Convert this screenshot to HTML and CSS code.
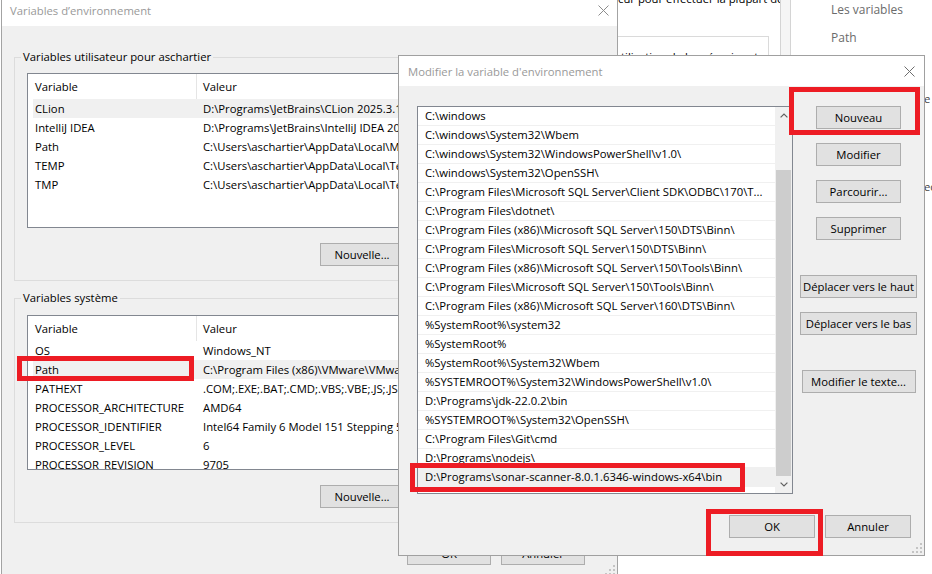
FILE: index.html
```html
<!doctype html>
<html>
  <head>
    <meta charset="utf-8">
    <title>Variables d'environnement</title>
    <link rel="stylesheet" href="styles.css">
  </head>
  <body>
    <div class="bg-win">
      <p class="bg-line">cur pour effectuer la plupart de</p>
      <div class="bg-box">
        <p class="bg-line">tilisation de la mémoire et</p>
      </div>
    </div>
    <div class="bg-split"></div>
    <div class="bg-pane">
      <p class="pane-item">Les variables</p>
      <p class="pane-item">Path</p>
      <p class="pane-tail first">e</p>
      <p class="pane-tail">ec</p>
    </div>

    <section class="win win-env">
      <header class="titlebar">
        <span>Variables d’environnement</span>
        <svg class="close" width="11" height="11" viewBox="0 0 11 11"><path d="M0.5 0.5L10.5 10.5M10.5 0.5L0.5 10.5" stroke="#8c8c8c" stroke-width="1"/></svg>
      </header>
      <div class="env-body">
        <fieldset class="group">
          <legend>Variables utilisateur pour aschartier</legend>
          <div class="listview">
            <div class="lv-head"><span class="col-name">Variable</span><span class="col-val">Valeur</span></div>
            <div class="lv-row sel"><span class="col-name">CLion</span><span class="col-val">D:\Programs\JetBrains\CLion 2025.3.1\bin;</span></div>
            <div class="lv-row"><span class="col-name">IntelliJ IDEA</span><span class="col-val">D:\Programs\JetBrains\IntelliJ IDEA 2025.3\bin;</span></div>
            <div class="lv-row"><span class="col-name">Path</span><span class="col-val">C:\Users\aschartier\AppData\Local\Microsoft\WindowsApps;</span></div>
            <div class="lv-row"><span class="col-name">TEMP</span><span class="col-val">C:\Users\aschartier\AppData\Local\Temp</span></div>
            <div class="lv-row"><span class="col-name">TMP</span><span class="col-val">C:\Users\aschartier\AppData\Local\Temp</span></div>
          </div>
          <div class="group-actions">
            <button class="btn">Nouvelle...</button>
          </div>
        </fieldset>

        <fieldset class="group">
          <legend>Variables système</legend>
          <div class="listview">
            <div class="lv-head"><span class="col-name">Variable</span><span class="col-val">Valeur</span></div>
            <div class="lv-row"><span class="col-name">OS</span><span class="col-val">Windows_NT</span></div>
            <div class="lv-row sel"><span class="col-name">Path</span><span class="col-val">C:\Program Files (x86)\VMware\VMware Player\bin\;</span></div>
            <div class="lv-row"><span class="col-name">PATHEXT</span><span class="col-val">.COM;.EXE;.BAT;.CMD;.VBS;.VBE;.JS;.JSE;.WSF;.WSH;.MSC</span></div>
            <div class="lv-row"><span class="col-name">PROCESSOR_ARCHITECTURE</span><span class="col-val">AMD64</span></div>
            <div class="lv-row"><span class="col-name">PROCESSOR_IDENTIFIER</span><span class="col-val">Intel64 Family 6 Model 151 Stepping 5, GenuineIntel</span></div>
            <div class="lv-row"><span class="col-name">PROCESSOR_LEVEL</span><span class="col-val">6</span></div>
            <div class="lv-row"><span class="col-name">PROCESSOR_REVISION</span><span class="col-val">9705</span></div>
          </div>
          <div class="group-actions">
            <button class="btn">Nouvelle...</button>
          </div>
        </fieldset>

        <div class="dlg-actions">
          <button class="btn">OK</button>
          <button class="btn">Annuler</button>
        </div>
      </div>
      <svg class="grip" width="10" height="10" viewBox="0 0 10 10"><path d="M8 0h2v2H8zM4 4h2v2H4zM8 4h2v2H8zM0 8h2v2H0zM4 8h2v2H4zM8 8h2v2H8z" fill="#c4c4c4"/></svg>
    </section>

    <section class="win win-edit">
      <header class="titlebar">
        <span>Modifier la variable d'environnement</span>
        <svg class="close" width="11" height="11" viewBox="0 0 11 11"><path d="M0.5 0.5L10.5 10.5M10.5 0.5L0.5 10.5" stroke="#6e6e6e" stroke-width="1"/></svg>
      </header>
      <div class="edit-body">
        <div class="edit-main">
          <div class="pathlist">
            <ul class="paths">
              <li>C:\windows</li>
              <li>C:\windows\System32\Wbem</li>
              <li>C:\windows\System32\WindowsPowerShell\v1.0\</li>
              <li>C:\windows\System32\OpenSSH\</li>
              <li>C:\Program Files\Microsoft SQL Server\Client SDK\ODBC\170\T...</li>
              <li>C:\Program Files\dotnet\</li>
              <li>C:\Program Files (x86)\Microsoft SQL Server\150\DTS\Binn\</li>
              <li>C:\Program Files\Microsoft SQL Server\150\DTS\Binn\</li>
              <li>C:\Program Files (x86)\Microsoft SQL Server\150\Tools\Binn\</li>
              <li>C:\Program Files\Microsoft SQL Server\150\Tools\Binn\</li>
              <li>C:\Program Files (x86)\Microsoft SQL Server\160\DTS\Binn\</li>
              <li>%SystemRoot%\system32</li>
              <li>%SystemRoot%</li>
              <li>%SystemRoot%\System32\Wbem</li>
              <li>%SYSTEMROOT%\System32\WindowsPowerShell\v1.0\</li>
              <li>D:\Programs\jdk-22.0.2\bin</li>
              <li>%SYSTEMROOT%\System32\OpenSSH\</li>
              <li>C:\Program Files\Git\cmd</li>
              <li>D:\Programs\nodejs\</li>
              <li class="sel">D:\Programs\sonar-scanner-8.0.1.6346-windows-x64\bin</li>
            </ul>
            <div class="vscroll">
              <span class="arrow"><svg width="8" height="5" viewBox="0 0 8 5"><path d="M0.6 4.4L4 1L7.4 4.4" fill="none" stroke="#606060" stroke-width="1.2"/></svg></span>
              <div class="track"><div class="thumb"></div></div>
              <span class="arrow"><svg width="8" height="5" viewBox="0 0 8 5"><path d="M0.6 0.6L4 4L7.4 0.6" fill="none" stroke="#606060" stroke-width="1.2"/></svg></span>
            </div>
          </div>
          <div class="edit-side">
            <button class="btn">Nouveau</button>
            <button class="btn">Modifier</button>
            <button class="btn">Parcourir...</button>
            <button class="btn">Supprimer</button>
            <button class="btn wide push">Déplacer vers le haut</button>
            <button class="btn wide">Déplacer vers le bas</button>
            <button class="btn mid push">Modifier le texte...</button>
          </div>
        </div>
        <div class="dlg-actions">
          <button class="btn">OK</button>
          <button class="btn">Annuler</button>
        </div>
      </div>
      <svg class="grip" width="10" height="10" viewBox="0 0 10 10"><path d="M8 0h2v2H8zM4 4h2v2H4zM8 4h2v2H8zM0 8h2v2H0zM4 8h2v2H4zM8 8h2v2H8z" fill="#c4c4c4"/></svg>
    </section>

    <!-- red annotation boxes -->
    <div class="mark mark-path"></div>
    <div class="mark mark-new"></div>
    <div class="mark mark-sonar"></div>
    <div class="mark mark-ok"></div>
  </body>
</html>
```
FILE: styles.css
```css
* {
  box-sizing: border-box;
}

body {
  margin: 0;
  width: 932px;
  height: 574px;
  overflow: hidden;
  position: relative;
  background: #fff;
  font-family: "Open Sans", "Noto Sans", sans-serif;
  font-size: 11.3px;
  color: #000;
}

/* windows behind, on the right */
.bg-win {
  position: absolute;
  left: 617px;
  top: -9px;
  width: 163px;
  height: 100px;
  background: #fff;
}
.bg-line {
  margin: 0;
  padding-left: 1px;
  line-height: 16px;
  white-space: nowrap;
  overflow: hidden;
}
.bg-box {
  margin: 29px 11px 0 0;
  height: 60px;
  border: 1px solid #dadada;
  padding: 12px 0 0 2px;
}
.bg-split {
  position: absolute;
  left: 780px;
  top: 0;
  width: 11px;
  height: 60px;
  border-left: 1px solid #d4d4d4;
  border-right: 1px solid #d4d4d4;
  background: #f5f5f5;
}
.bg-pane {
  position: absolute;
  left: 791px;
  top: 0;
  width: 141px;
  height: 574px;
  overflow: hidden;
  color: #6b6b6b;
  font-size: 12px;
}
.pane-item {
  margin: 1px 0 11px;
  padding-left: 40px;
  line-height: 17px;
}
.pane-tail {
  margin: 0;
  padding-left: 133px;
  line-height: 17px;
  color: #444;
  font-size: 11.3px;
}
.pane-tail.first {
  margin: 44px 0 71px;
}

/* dialog windows */
.win {
  position: absolute;
  background: #f0f0f0;
  display: flex;
  flex-direction: column;
}
.win-env {
  left: 1px;
  top: 0;
  width: 617px;
  height: 578px;
  border: 1px solid #a3a3a3;
  border-top: 0;
}
.win-edit {
  left: 398px;
  top: 55px;
  width: 527px;
  height: 501px;
  border: 1px solid #a0a0a0;
  z-index: 2;
}
.titlebar {
  display: flex;
  flex-shrink: 0;
  background: #fff;
  color: #999;
}
.win-env .titlebar {
  height: 26px;
  padding: 3px 8px 0;
  align-items: flex-start;
  line-height: 16px;
}
.win-edit .titlebar {
  height: 30px;
  padding: 0 9px;
  align-items: center;
}
.close {
  margin-left: auto;
}
.win-env .close {
  margin-top: 2px;
}
.grip {
  position: absolute;
  right: 2px;
  bottom: 2px;
}

.btn {
  width: 84px;
  height: 23px;
  padding: 0;
  flex-shrink: 0;
  border: 1px solid #adadad;
  background: #e1e1e1;
  font: inherit;
  color: #000;
  white-space: nowrap;
}
.dlg-actions {
  display: flex;
  justify-content: flex-end;
  gap: 10px;
}

/* Variables d'environnement */
.env-body {
  padding: 23px 12px 0;
}
.group {
  margin: 0;
  min-width: 0;
  padding: 8px 12px 14px;
  border: 1px solid #dcdcdc;
}
.group + .group {
  margin-top: 9px;
  padding-top: 9px;
}
.group legend {
  padding: 0 2px;
  margin-left: -6px;
  line-height: 16px;
}
.listview {
  height: 155px;
  border: 1px solid #828790;
  background: #fff;
  overflow: hidden;
}
.lv-head,
.lv-row {
  display: flex;
  margin-left: 5px;
  white-space: nowrap;
}
.lv-head {
  height: 25px;
}
.lv-row {
  height: 19px;
  align-items: center;
}
.lv-row.sel {
  background: #f0f0f0;
}
.col-name {
  width: 164px;
  flex-shrink: 0;
  padding-left: 2px;
  overflow: hidden;
}
/* the rest of the column sits under the edit dialog */
.col-val {
  width: 201px;
  padding-left: 6px;
  overflow: hidden;
}
.lv-head span {
  display: flex;
  align-items: center;
}
.lv-head .col-name {
  border-right: 1px solid #e5e5e5;
}
.group-actions {
  display: flex;
  justify-content: flex-end;
  margin-top: 15px;
  padding-right: 188px;
}
.env-body .dlg-actions {
  margin-top: 19px;
  padding-right: 20px;
}

/* Modifier la variable */
.edit-body {
  flex: 1;
  padding: 20px 0 0 18px;
}
.edit-main {
  display: flex;
  align-items: flex-start;
}
.pathlist {
  display: flex;
  flex-shrink: 0;
  width: 376px;
  height: 388px;
  border: 1px solid #828790;
  background: #fff;
}
.paths {
  flex: 1;
  min-width: 0;
  margin: 0;
  padding: 0;
  list-style: none;
  overflow: hidden;
}
.paths li {
  height: 19px;
  line-height: 18px;
  padding-left: 7px;
  border-bottom: 1px solid #f0f0f0;
  white-space: nowrap;
  overflow: hidden;
}
.paths li.sel {
  background: #f0f0f0;
}
.vscroll {
  width: 17px;
  display: flex;
  flex-direction: column;
  background: #f0f0f0;
}
.vscroll .arrow {
  height: 17px;
  display: flex;
  align-items: center;
  justify-content: center;
}
.track {
  flex: 1;
  display: flex;
  flex-direction: column;
  justify-content: flex-end;
  padding: 0 1px;
}
.thumb {
  height: 306px;
  background: #cdcdcd;
}
.edit-side {
  flex: 1;
  display: flex;
  flex-direction: column;
  align-items: center;
  gap: 14px;
}
.edit-side .btn {
  width: 85px;
}
.edit-side .btn.wide {
  width: 117px;
}
.edit-side .btn.mid {
  width: 114px;
}
.edit-side .push {
  margin-top: 21px;
}
.edit-body .dlg-actions {
  margin-top: 21px;
  padding-right: 13px;
}
.edit-body .dlg-actions .btn {
  width: 86px;
}

/* red annotation boxes */
.mark {
  position: absolute;
  z-index: 3;
  border: 5px solid #ed1c24;
}
.mark-path {
  left: 17px;
  top: 356px;
  width: 177px;
  height: 25px;
}
.mark-new {
  left: 789px;
  top: 87px;
  width: 131px;
  height: 48px;
}
.mark-sonar {
  left: 410px;
  top: 463px;
  width: 335px;
  height: 29px;
}
.mark-ok {
  left: 706px;
  top: 509px;
  width: 117px;
  height: 47px;
}
```
